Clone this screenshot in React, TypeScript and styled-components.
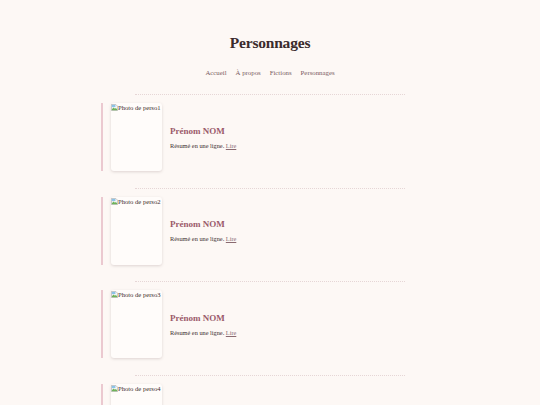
import React from "react";
import styled, { createGlobalStyle } from "styled-components";

type Perso = {
  id: number;
  name: string;
  summary: string;
};

const persos: Perso[] = [1, 2, 3, 4].map((i) => ({
  id: i,
  name: "Prénom NOM",
  summary: "Résumé en une ligne.",
}));

const navLinks = ["Accueil", "À propos", "Fictions", "Personnages"];

const BrokenIcon = () => (
  <svg width="7" height="7" viewBox="0 0 16 16">
    <path d="M1 1h10l4 4v10H1z" fill="#f4f4f4" stroke="#9a9a9a" strokeWidth="1.2" />
    <path d="M2 12l4-4 3 3 2-2 3 3v2H2z" fill="#6fb35a" />
    <rect x="2" y="2" width="8" height="5" fill="#8bc3e8" />
  </svg>
);

const App: React.FC = () => {
  return (
    <Page>
      <GlobalStyle />
      <Title>Personnages</Title>
      <Nav>
        {navLinks.map((link) => (
          <NavLink key={link}>{link}</NavLink>
        ))}
      </Nav>
      <List>
        {persos.map((perso) => (
          <li key={perso.id}>
            <Separator />
            <Card>
              <Photo>
                <BrokenIcon />
                <AltText>Photo de perso{perso.id}</AltText>
              </Photo>
              <Info>
                <Name>{perso.name}</Name>
                <Summary>
                  {perso.summary} <ReadLink>Lire</ReadLink>
                </Summary>
              </Info>
            </Card>
          </li>
        ))}
      </List>
    </Page>
  );
};

export default App;

const GlobalStyle = createGlobalStyle`
  html, body {
    margin: 0;
    padding: 0;
    background: #fdf8f5;
  }
  body {
    font-family: "Liberation Serif", "DejaVu Serif", serif;
    color: #3b2d2e;
  }
`;

const Page = styled.div`
  width: 540px;
  height: 405px;
  overflow: hidden;
  padding-top: 32px;
  box-sizing: border-box;
`;

const Title = styled.h1`
  margin: 0;
  font-size: 15.5px;
  line-height: 21px;
  font-weight: 700;
  text-align: center;
  color: #3a2b2c;
  letter-spacing: -0.2px;
`;

const Nav = styled.nav`
  display: flex;
  justify-content: center;
  gap: 9px;
  margin-top: 15px;
`;

const NavLink = styled.a`
  font-size: 6.8px;
  line-height: 10px;
  color: #7a5b62;
`;

const List = styled.ul`
  list-style: none;
  margin: 16px 0 0;
  padding: 0 0 0 101px;
`;

const Separator = styled.hr`
  width: 270px;
  margin: 0 0 8px 34px;
  border: 0;
  border-top: 1px dotted #e6d6d6;
`;

const Card = styled.div`
  display: flex;
  align-items: center;
  gap: 8px;
  border-left: 2px solid #ebc9d0;
  padding-left: 8px;
  margin-bottom: 16.5px;
`;

const Photo = styled.div`
  width: 51px;
  height: 68px;
  background: #fffcfa;
  border-radius: 3px;
  box-shadow: 0 1px 3px rgba(80, 50, 50, 0.18);
  display: flex;
  align-items: flex-start;
  padding-top: 1px;
  box-sizing: border-box;
`;

const AltText = styled.span`
  font-size: 6.6px;
  line-height: 7px;
  color: #3b2d2e;
  white-space: nowrap;
`;

const Info = styled.div`
  display: flex;
  flex-direction: column;
  gap: 5px;
`;

const Name = styled.h2`
  margin: 0;
  font-size: 9px;
  line-height: 12px;
  font-weight: 700;
  color: #9b5a6a;
`;

const Summary = styled.p`
  margin: 0;
  font-size: 6.3px;
  line-height: 8px;
  color: #3b2d2e;
`;

const ReadLink = styled.a`
  color: #8a6a70;
  text-decoration: underline;
`;
